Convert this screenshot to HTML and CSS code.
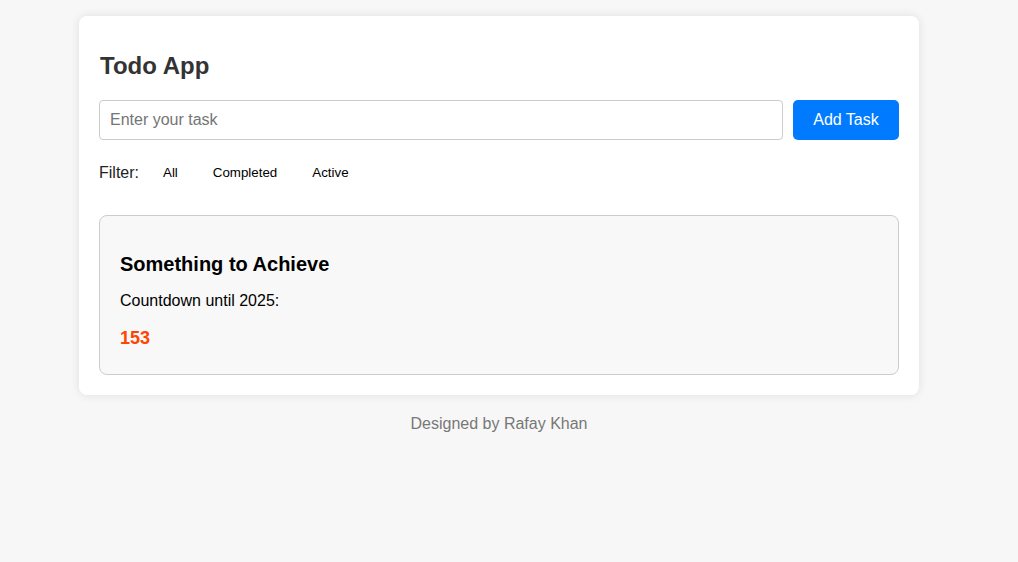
FILE: index.html
```html
<!DOCTYPE html>
<html lang="en">
<head>
<meta charset="UTF-8">
<title>Todo App</title>
<link rel="stylesheet" href="styles.css">
</head>
<body>
<main class="container">
  <h1 class="title">Todo App</h1>
  <div class="input-row">
    <input class="task-input" type="text" placeholder="Enter your task">
    <button class="add-btn">Add Task</button>
  </div>
  <div class="filter-row">
    <span class="filter-label">Filter:</span>
    <button class="filter-btn">All</button>
    <button class="filter-btn">Completed</button>
    <button class="filter-btn">Active</button>
  </div>
  <section class="goal-card">
    <h3 class="goal-title">Something to Achieve</h3>
    <p class="goal-text">Countdown until 2025:</p>
    <div class="goal-count">153</div>
  </section>
</main>
<footer class="footer">Designed by Rafay Khan</footer>
</body>
</html>
```

FILE: styles.css
```css
html, body {
  margin: 0;
  background: #f7f7f7;
}
body {
  padding: 16px 20px 0 0;
  font-family: "Liberation Sans", Arial, sans-serif;
  color: #333;
}
.container {
  width: 800px;
  margin: 0 auto;
  padding: 20px;
  background: #fff;
  border-radius: 8px;
  box-shadow: 0 0 10px rgba(0, 0, 0, 0.1);
}
.title {
  margin: 16px 0 20px;
  padding-left: 1px;
  font-size: 24px;
  font-weight: bold;
  color: #333;
}
.input-row {
  display: flex;
  gap: 10px;
  margin-bottom: 20px;
}
.task-input {
  flex: 1;
  height: 40px;
  box-sizing: border-box;
  padding: 0 10px;
  border: 1px solid #ccc;
  border-radius: 4px;
  font-family: "Liberation Sans", Arial, sans-serif;
  font-size: 16px;
  color: #333;
  outline: none;
}
.task-input::placeholder {
  color: #757575;
}
.add-btn {
  height: 40px;
  width: 106px;
  border: none;
  border-radius: 5px;
  background: #007bff;
  color: #fff;
  font-family: "Liberation Sans", Arial, sans-serif;
  font-size: 16px;
  padding: 0;
  cursor: pointer;
}
.filter-row {
  display: flex;
  align-items: center;
  gap: 5px;
  margin-bottom: 30px;
}
.filter-label {
  font-size: 16px;
  color: #222;
  margin-right: 4px;
}
.filter-btn {
  border: none;
  background: none;
  padding: 5px 15px;
  font-family: "Liberation Sans", Arial, sans-serif;
  font-size: 13.33px;
  color: #000;
  cursor: pointer;
}
.goal-card {
  background: #f8f8f8;
  border: 1px solid #ccc;
  border-radius: 8px;
  padding: 20px;
  color: #000;
}
.goal-title {
  margin: 17px 0 16px;
  font-size: 20px;
  font-weight: bold;
}
.goal-text {
  margin: 0;
  font-size: 16px;
}
.goal-count {
  margin: 18px 0 5px;
  font-size: 18px;
  font-weight: bold;
  color: #ff4500;
}
.footer {
  margin-top: 20px;
  text-align: center;
  font-size: 16px;
  color: #777;
}
```
